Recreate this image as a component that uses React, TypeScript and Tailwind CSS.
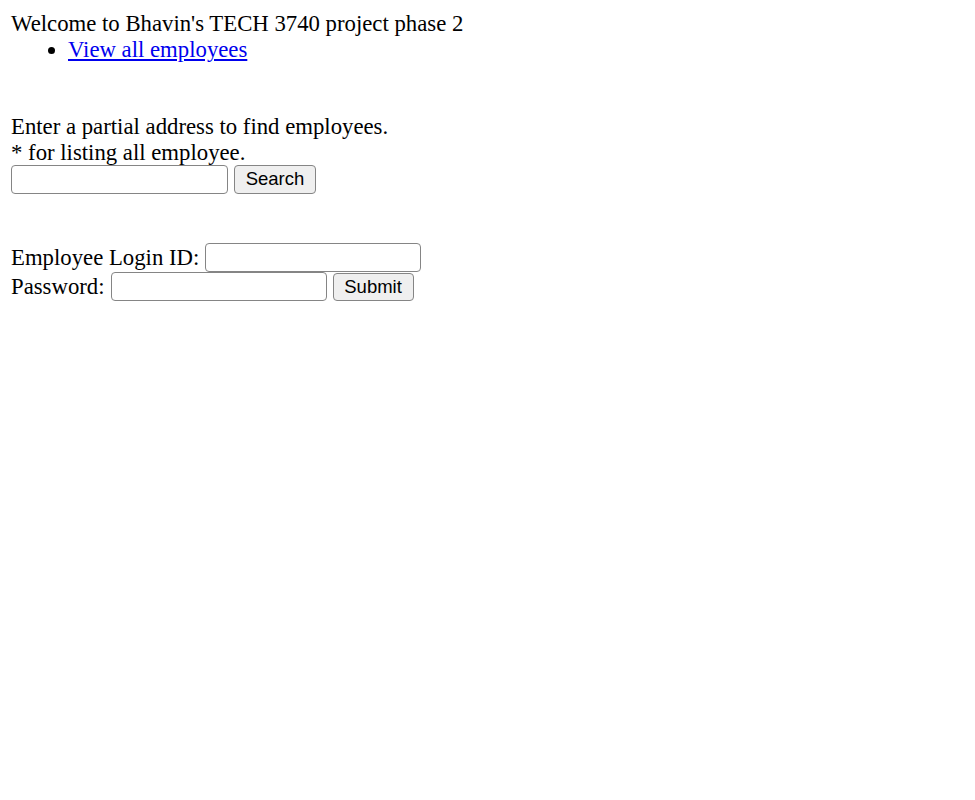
export default function App() {
  return (
    <div className="min-h-screen bg-white px-[11px] pt-[11px] text-black font-['Liberation_Serif',serif] text-[22.75px] leading-[26px]">
      <div>Welcome to Bhavin's TECH 3740 project phase 2</div>
      <ul className="list-disc pl-[57px]">
        <li>
          <a href="#" className="text-[#0000ee] underline">
            View all employees
          </a>
        </li>
      </ul>

      <div className="mt-[51px]">Enter a partial address to find employees.</div>
      <div>* for listing all employee.</div>
      <div className="flex items-center gap-[6px] -mt-px">
        <input type="text" className="h-[29px] w-[217px] rounded-[4px] border border-[#858585] bg-white" />
        <button className="h-[29px] w-[82px] rounded-[4px] border border-[#858585] bg-[#efefef] font-['Liberation_Sans',sans-serif] text-[18.5px] leading-none">
          Search
        </button>
      </div>

      <div className="mt-[49px] flex flex-col">
        <div className="flex h-[29px] items-center gap-[6px]">
          <span>Employee Login ID:</span>
          <input type="text" className="h-[29px] w-[216px] rounded-[4px] border border-[#858585] bg-white" />
        </div>
        <div className="flex h-[29px] items-center gap-[6px]">
          <span>Password:</span>
          <input type="password" className="h-[29px] w-[216px] rounded-[4px] border border-[#858585] bg-white" />
          <button className="h-[28px] w-[81px] self-end rounded-[4px] border border-[#858585] bg-[#efefef] font-['Liberation_Sans',sans-serif] text-[18.5px] leading-none">
            Submit
          </button>
        </div>
      </div>
    </div>
  );
}
